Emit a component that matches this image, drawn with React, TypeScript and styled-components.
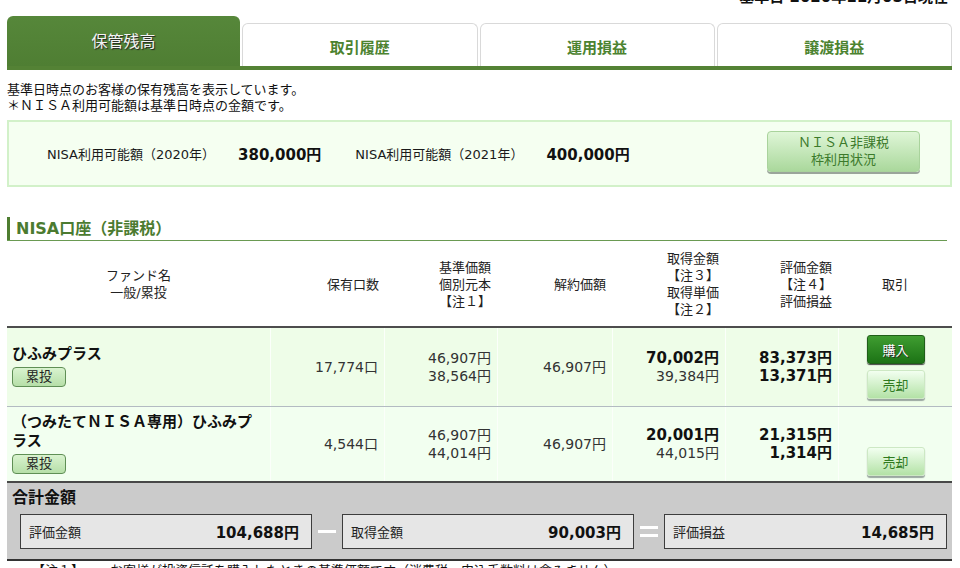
import React from 'react';
import styled, { createGlobalStyle } from 'styled-components';

const Global = createGlobalStyle`
  html, body { margin: 0; padding: 0; background: #fff; }
  body {
    font-family: "DejaVu Sans", "Noto Sans CJK JP", sans-serif;
    color: #1a1a1a;
    overflow: hidden;
    text-spacing-trim: space-all;
  }
  * { box-sizing: border-box; }
`;

const Page = styled.div`
  width: 960px;
  height: 568px;
  overflow: hidden;
  padding: 0 8px 0 7px;
`;

const DateLine = styled.div`
  margin-top: -12px;
  text-align: right;
  padding-right: 4px;
  font-size: 15px;
  font-weight: bold;
  line-height: 18px;
  color: #111;
`;

const TabRow = styled.div`
  margin-top: 10px;
  display: flex;
  align-items: flex-end;
  gap: 2px;
  border-bottom: 4px solid #548235;
`;

const Tab = styled.div<{ $active?: boolean }>`
  flex: 1;
  height: ${(p) => (p.$active ? '50px' : '43px')};
  display: flex;
  align-items: center;
  justify-content: center;
  border-radius: 6px 6px 0 0;
  background: ${(p) => (p.$active ? 'linear-gradient(#56873a, #4f7e33)' : '#fff')};
  border: ${(p) => (p.$active ? 'none' : '1px solid #d9d9d9')};
  border-bottom: none;
  font-size: ${(p) => (p.$active ? '16px' : '15px')};
  font-weight: ${(p) => (p.$active ? 'normal' : 'bold')};
  color: ${(p) => (p.$active ? '#f4f4f4' : '#4c8330')};
  text-shadow: ${(p) => (p.$active ? '1px 1px 1px #222' : 'none')};
  padding-top: ${(p) => (p.$active ? '0' : '3px')};
  padding-bottom: ${(p) => (p.$active ? '2px' : '0')};
`;

const Intro = styled.div`
  margin-top: 12px;
  font-size: 13px;
  line-height: 16px;
  color: #111;
`;

const NisaBox = styled.div`
  margin-top: 6px;
  height: 67px;
  border: 2px solid #d2f1c9;
  background: #f5fff1;
  display: flex;
  align-items: center;
  padding-left: 38px;
`;

const NisaLabel = styled.span<{ $gap?: number }>`
  font-size: 13px;
  color: #1a1a1a;
  margin-left: ${(p) => p.$gap ?? 0}px;
`;

const NisaValue = styled.span`
  font-size: 15px;
  font-weight: bold;
  margin-left: 23px;
  color: #111;
`;

const NisaButton = styled.div`
  margin-left: auto;
  margin-right: 30px;
  margin-top: -4px;
  width: 153px;
  height: 41px;
  border: 1px solid #a9d39c;
  border-radius: 4px;
  background: linear-gradient(#dff6d7, #aad89c);
  box-shadow: 0 2px 0 #9aa59a;
  color: #3b7a2b;
  font-size: 13px;
  line-height: 17px;
  text-align: center;
  display: flex;
  flex-direction: column;
  justify-content: center;
  padding-bottom: 2px;
`;

const SectionHead = styled.div`
  margin-top: 30px;
  margin-right: 5px;
  border-bottom: 1px solid #6a9a52;
`;

const SectionTitle = styled.div`
  border-left: 3px solid #4e7d30;
  padding-left: 6px;
  font-size: 16px;
  font-weight: bold;
  line-height: 23px;
  color: #4b7b30;
`;

const cols = '263px 114px 113px 115px 113px 113px 1fr';

const HeadRow = styled.div`
  margin-top: 1px;
  display: grid;
  grid-template-columns: ${cols};
  height: 86px;
  border-bottom: 2px solid #4d4d4d;
`;

const HeadCell = styled.div<{ $align: 'left' | 'center' | 'right'; $pr?: number }>`
  display: flex;
  align-items: center;
  justify-content: ${(p) => (p.$align === 'right' ? 'flex-end' : p.$align === 'left' ? 'flex-start' : 'center')};
  padding-right: ${(p) => p.$pr ?? 0}px;
  font-size: 13px;
  line-height: 17px;
  color: #222;
`;

const HeadLines = styled.div`
  text-align: center;
`;

const DataRow = styled.div<{ $h: number; $bg: string; $last?: boolean }>`
  display: grid;
  grid-template-columns: ${cols};
  height: ${(p) => p.$h}px;
  background: ${(p) => p.$bg};
  border-bottom: ${(p) => (p.$last ? '2px solid #484848' : '1px solid #b3bbc2')};
`;

const Cell = styled.div<{ $first?: boolean }>`
  display: flex;
  flex-direction: column;
  justify-content: center;
  align-items: flex-end;
  padding-right: 6px;
  border-left: ${(p) => (p.$first ? 'none' : '1px solid #fbfffa')};
`;

const FundCell = styled.div`
  display: flex;
  flex-direction: column;
  justify-content: center;
  align-items: flex-start;
  padding: 0 14px 2px 5px;
`;

const FundName = styled.div`
  font-size: 15px;
  font-weight: bold;
  line-height: 19px;
  color: #111;
`;

const Badge = styled.div`
  margin-top: 3px;
  width: 54px;
  height: 20px;
  border: 1px solid #5f8f55;
  border-radius: 4px;
  background: linear-gradient(#d9f3cf, #b6dfa8);
  font-size: 13px;
  line-height: 18px;
  text-align: center;
  color: #222;
`;

const Num = styled.div`
  font-size: 14px;
  line-height: 18px;
  color: #333;
`;

const BoldNum = styled.div`
  font-size: 15px;
  font-weight: bold;
  line-height: 18px;
  color: #111;
`;

const ActionCell = styled.div`
  display: flex;
  flex-direction: column;
  align-items: center;
  justify-content: center;
  gap: 6px;
  border-left: 1px solid #fbfffa;
`;

const ActionButton = styled.div<{ $kind: 'buy' | 'sell'; $hidden?: boolean }>`
  width: 58px;
  height: 29px;
  border-radius: 3px;
  display: flex;
  align-items: center;
  justify-content: center;
  font-size: 13px;
  visibility: ${(p) => (p.$hidden ? 'hidden' : 'visible')};
  ${(p) =>
    p.$kind === 'buy'
      ? `
    background: linear-gradient(#3f9d31, #1c7315);
    border: 1px solid #1f5f18;
    color: #fff;
    text-shadow: 1px 1px 0 #2a2a2a;
    box-shadow: 0 1px 1px #444;
  `
      : `
    background: linear-gradient(#f2fff0, #b3e2a6);
    border: 1px solid #cde8c4;
    color: #2f7a1f;
    box-shadow: 0 2px 1px #9aa7a0;
  `}
`;

const TotalSection = styled.div`
  background: #cbcbcb;
  height: 78px;
  border-bottom: 2px solid #333;
  padding-top: 5px;
`;

const TotalTitle = styled.div`
  padding-left: 5px;
  font-size: 16px;
  font-weight: bold;
  line-height: 20px;
  color: #111;
`;

const TotalRow = styled.div`
  margin-top: 6px;
  display: flex;
  align-items: center;
  padding: 0 5px 0 13px;
`;

const TotalBox = styled.div<{ $w?: number }>`
  ${(p) => (p.$w ? `width: ${p.$w}px;` : 'flex: 1;')}
  height: 35px;
  border: 1px solid #3d3d3d;
  background: #e6e6e6;
  display: flex;
  align-items: center;
  justify-content: space-between;
  padding: 0 12px 0 8px;
`;

const TotalLabel = styled.span`
  font-size: 13px;
  color: #222;
`;

const TotalValue = styled.span`
  font-size: 15px;
  font-weight: bold;
  color: #111;
`;

const Sign = styled.div`
  width: 30px;
  display: flex;
  flex-direction: column;
  align-items: center;
  gap: 5px;
`;

const Bar = styled.div`
  width: 18px;
  height: 3px;
  background: #fff;
`;

const Footnote = styled.div`
  padding-left: 25px;
  padding-top: 1px;
  font-size: 13px;
  line-height: 18px;
  color: #111;
  white-space: nowrap;
`;

export default function App() {
  return (
    <>
      <Global />
      <Page>
        <DateLine>基準日 2020年11月05日現在</DateLine>
        <TabRow>
          <Tab $active>保管残高</Tab>
          <Tab>取引履歴</Tab>
          <Tab>運用損益</Tab>
          <Tab>譲渡損益</Tab>
        </TabRow>
        <Intro>
          <div>基準日時点のお客様の保有残高を表示しています。</div>
          <div>＊ＮＩＳＡ利用可能額は基準日時点の金額です。</div>
        </Intro>
        <NisaBox>
          <NisaLabel>NISA利用可能額（2020年）</NisaLabel>
          <NisaValue>380,000円</NisaValue>
          <NisaLabel $gap={34}>NISA利用可能額（2021年）</NisaLabel>
          <NisaValue>400,000円</NisaValue>
          <NisaButton>
            <div>ＮＩＳＡ非課税</div>
            <div>枠利用状況</div>
          </NisaButton>
        </NisaBox>
        <SectionHead>
          <SectionTitle>NISA口座（非課税）</SectionTitle>
        </SectionHead>
        <HeadRow>
          <HeadCell $align="center">
            <HeadLines>
              <div>ファンド名</div>
              <div>一般/累投</div>
            </HeadLines>
          </HeadCell>
          <HeadCell $align="right" $pr={5}>保有口数</HeadCell>
          <HeadCell $align="right" $pr={6}>
            <HeadLines>
              <div>基準価額</div>
              <div>個別元本</div>
              <div>【注１】</div>
            </HeadLines>
          </HeadCell>
          <HeadCell $align="right" $pr={6}>解約価額</HeadCell>
          <HeadCell $align="right" $pr={6}>
            <HeadLines>
              <div>取得金額</div>
              <div>【注３】</div>
              <div>取得単価</div>
              <div>【注２】</div>
            </HeadLines>
          </HeadCell>
          <HeadCell $align="right" $pr={6}>
            <HeadLines>
              <div>評価金額</div>
              <div>【注４】</div>
              <div>評価損益</div>
            </HeadLines>
          </HeadCell>
          <HeadCell $align="center">取引</HeadCell>
        </HeadRow>
        <DataRow $h={79} $bg="#eefde8">
          <FundCell>
            <FundName>ひふみプラス</FundName>
            <Badge>累投</Badge>
          </FundCell>
          <Cell>
            <Num>17,774口</Num>
          </Cell>
          <Cell>
            <Num>46,907円</Num>
            <Num>38,564円</Num>
          </Cell>
          <Cell>
            <Num>46,907円</Num>
          </Cell>
          <Cell>
            <BoldNum>70,002円</BoldNum>
            <Num>39,384円</Num>
          </Cell>
          <Cell>
            <BoldNum>83,373円</BoldNum>
            <BoldNum>13,371円</BoldNum>
          </Cell>
          <ActionCell>
            <ActionButton $kind="buy">購入</ActionButton>
            <ActionButton $kind="sell">売却</ActionButton>
          </ActionCell>
        </DataRow>
        <DataRow $h={76} $bg="#f2fff0" $last>
          <FundCell>
            <FundName>（つみたてＮＩＳＡ専用）ひふみプラス</FundName>
            <Badge>累投</Badge>
          </FundCell>
          <Cell>
            <Num>4,544口</Num>
          </Cell>
          <Cell>
            <Num>46,907円</Num>
            <Num>44,014円</Num>
          </Cell>
          <Cell>
            <Num>46,907円</Num>
          </Cell>
          <Cell>
            <BoldNum>20,001円</BoldNum>
            <Num>44,015円</Num>
          </Cell>
          <Cell>
            <BoldNum>21,315円</BoldNum>
            <BoldNum>1,314円</BoldNum>
          </Cell>
          <ActionCell>
            <ActionButton $kind="buy" $hidden>購入</ActionButton>
            <ActionButton $kind="sell">売却</ActionButton>
          </ActionCell>
        </DataRow>
        <TotalSection>
          <TotalTitle>合計金額</TotalTitle>
          <TotalRow>
            <TotalBox $w={292}>
              <TotalLabel>評価金額</TotalLabel>
              <TotalValue>104,688円</TotalValue>
            </TotalBox>
            <Sign>
              <Bar />
            </Sign>
            <TotalBox $w={292}>
              <TotalLabel>取得金額</TotalLabel>
              <TotalValue>90,003円</TotalValue>
            </TotalBox>
            <Sign>
              <Bar />
              <Bar />
            </Sign>
            <TotalBox>
              <TotalLabel>評価損益</TotalLabel>
              <TotalValue>14,685円</TotalValue>
            </TotalBox>
          </TotalRow>
        </TotalSection>
        <Footnote>【注１】　　お客様が投資信託を購入したときの基準価額です（消費税・申込手数料は含みません）。</Footnote>
      </Page>
    </>
  );
}
